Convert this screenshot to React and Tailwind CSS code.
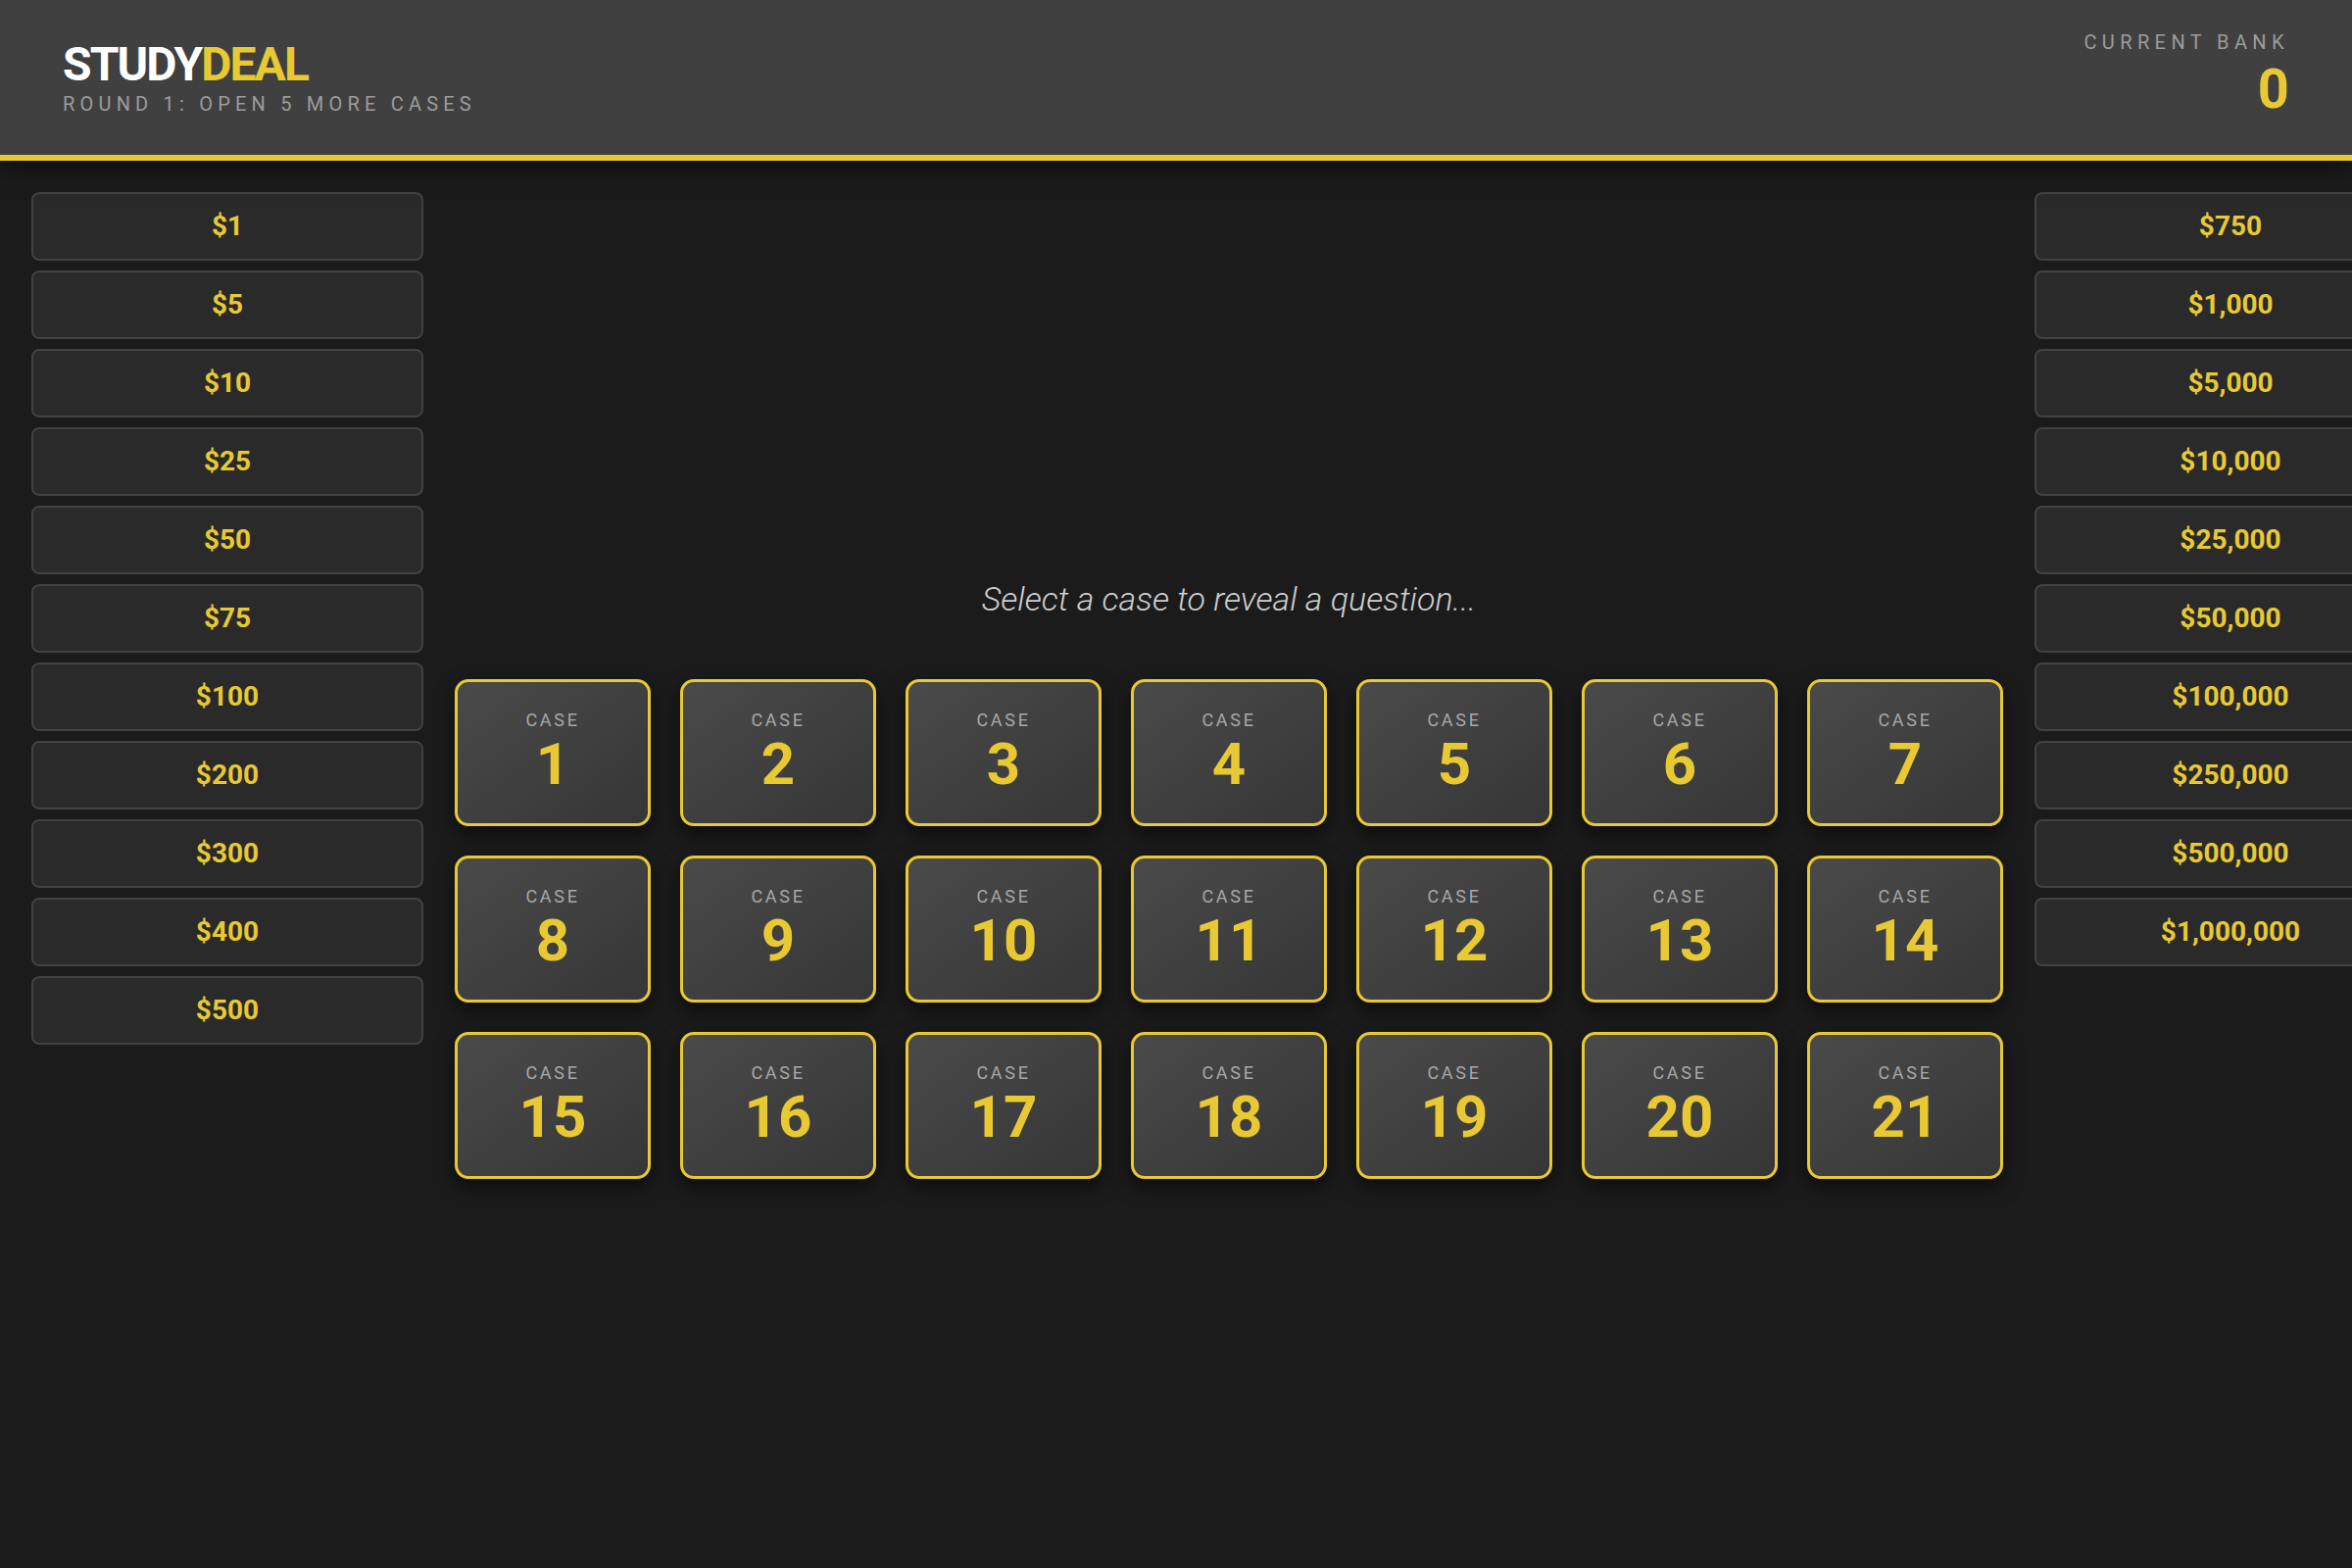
import React from 'react';

const lowValues = ['$1', '$5', '$10', '$25', '$50', '$75', '$100', '$200', '$300', '$400', '$500'];
const highValues = ['$750', '$1,000', '$5,000', '$10,000', '$25,000', '$50,000', '$100,000', '$250,000', '$500,000', '$1,000,000'];
const cases = Array.from({ length: 21 }, (_, i) => i + 1);

const MoneyBoard = ({ values }) => {
    return (
        <aside className="w-[400px] shrink-0 flex flex-col gap-[10px]">
            {values.map((v) => (
                <div
                    key={v}
                    className="h-[70px] flex items-center justify-center rounded-lg border-2 border-[#424242] bg-[#2a2a2a] text-[28px] font-bold text-[#e8c934]"
                >
                    {v}
                </div>
            ))}
        </aside>
    );
};

const CaseButton = ({ n }) => {
    return (
        <button className="w-[200px] h-[150px] flex flex-col items-center justify-center gap-[6px] rounded-[14px] border-[3px] border-[#e8c934] bg-gradient-to-br from-[#4a4a4a] to-[#363636] shadow-[0_8px_20px_rgba(0,0,0,0.55)]">
            <span className="text-[18px] leading-none tracking-[0.15em] text-[#a8a8a8]">CASE</span>
            <span className="text-[60px] leading-none font-bold text-[#e8c934]">{n}</span>
        </button>
    );
};

const App = () => {
    return (
        <div className="w-full min-h-screen overflow-hidden bg-[#1b1b1b] font-['Roboto',sans-serif]">
            <header className="relative z-10 h-[164px] flex items-start justify-between px-16 bg-[#404040] border-b-[6px] border-[#e8c934] shadow-[0_6px_24px_rgba(0,0,0,0.55)]">
                <div className="flex flex-col pt-[42px]">
                    <h1 className="text-[48px] leading-none font-bold tracking-[-0.04em]">
                        <span className="text-white">STUDY</span>
                        <span className="text-[#e8c934]">DEAL</span>
                    </h1>
                    <p className="mt-[6px] text-[20px] leading-none tracking-[0.26em] text-[#9c9c9c]">
                        ROUND 1: OPEN 5 MORE CASES
                    </p>
                </div>
                <div className="flex flex-col items-end pt-[33px]">
                    <span className="text-[20px] leading-none tracking-[0.27em] text-[#9c9c9c]">CURRENT BANK</span>
                    <span className="mt-[10px] text-[56px] leading-none font-bold text-[#e8c934]">0</span>
                </div>
            </header>

            <main className="flex gap-8 px-8 pt-8">
                <MoneyBoard values={lowValues} />

                <section className="shrink-0 flex flex-col gap-8">
                    <div className="h-[465px] flex items-end justify-center pb-[26px]">
                        <p className="text-[34px] leading-[48px] italic font-light text-[#cfcfcf]">
                            Select a case to reveal a question...
                        </p>
                    </div>
                    <div className="grid grid-cols-[repeat(7,200px)] gap-[30px]">
                        {cases.map((n) => (
                            <CaseButton key={n} n={n} />
                        ))}
                    </div>
                </section>

                <MoneyBoard values={highValues} />
            </main>
        </div>
    );
};

export default App;
